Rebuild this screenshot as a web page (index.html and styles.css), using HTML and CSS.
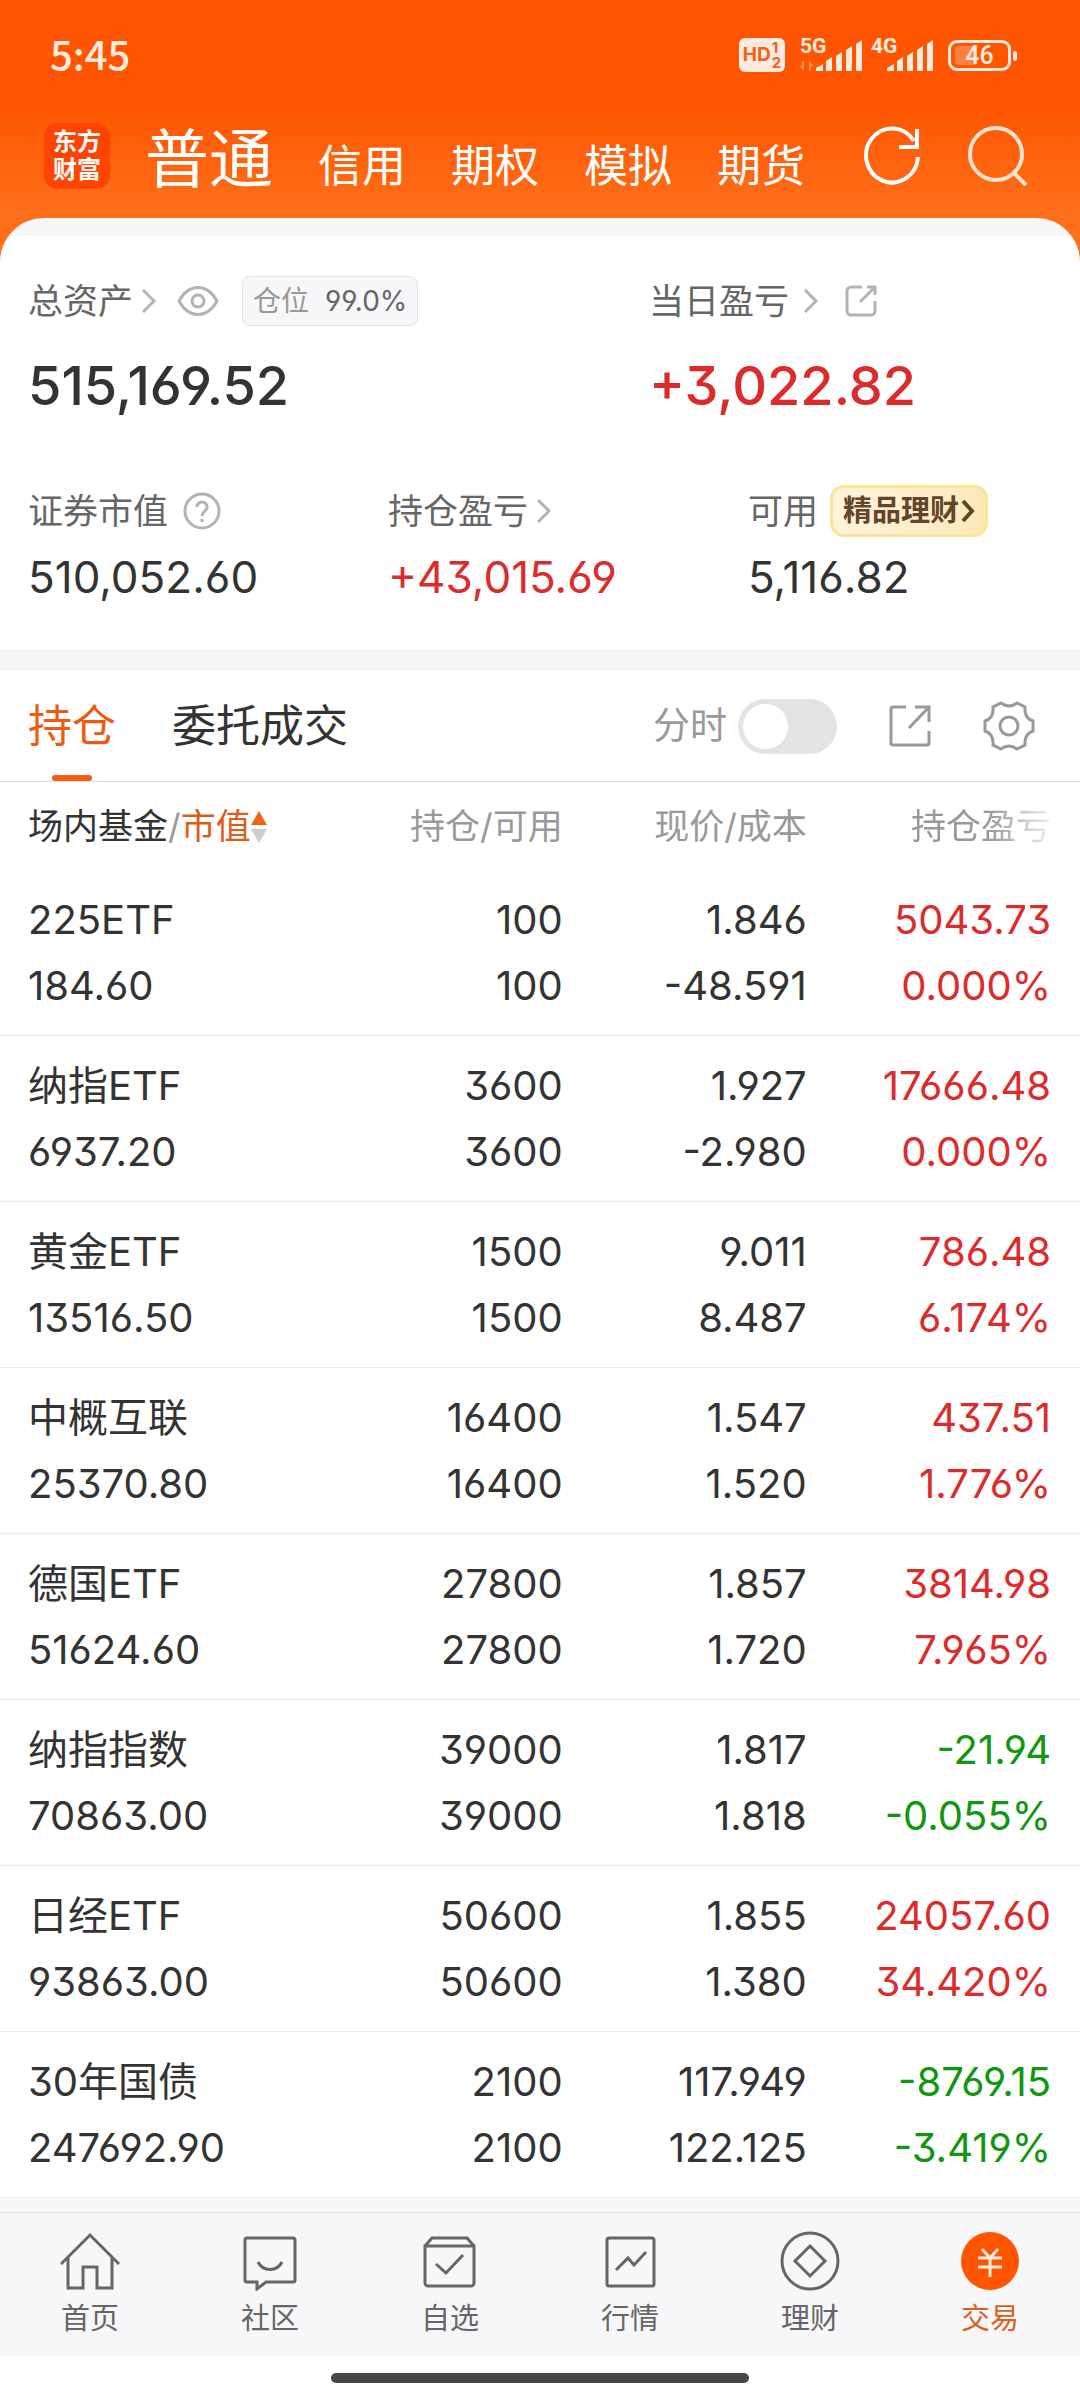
FILE: index.html
```html
<!DOCTYPE html>
<html lang="zh-CN">

<head>
    <meta charset="UTF-8">
    <meta name="viewport" content="width=device-width, initial-scale=1.0">
    <title>交易</title>
    <link rel="stylesheet" href="styles.css">
</head>

<body>
    <header class="header">
        <div class="status">
            <span class="time">5:45</span>
            <div class="status-icons">
                <span class="hd"><b>HD</b><span class="sim"><i>1</i><i>2</i></span></span>
                <svg class="signal" width="64" height="56" viewBox="0 -10 64 56">
                    <text x="1" y="16" class="net">5G</text>
                    <path class="dim" d="M5 24v10l-5-5h3v-5zM10 34V24l5 5h-3v5z" />
                    <path d="M17 34v-3l7-4v7zM27 34V24l6-4v14zM37 34V19l6-4v19zM47 34V13l6-4v25zM57 34V7l6-4v31z" />
                </svg>
                <svg class="signal second" width="64" height="56" viewBox="0 -10 64 56">
                    <text x="1" y="16" class="net">4G</text>
                    <path d="M17 34v-3l7-4v7zM27 34V24l6-4v14zM37 34V19l6-4v19zM47 34V13l6-4v25zM57 34V7l6-4v31z" />
                </svg>
                <span class="battery"><span class="level"></span><span class="charge">46</span></span>
            </div>
        </div>
        <div class="topbar">
            <a class="logo" href="#">东方<br>财富</a>
            <nav class="modes">
                <a class="mode active" href="#">普通</a>
                <a class="mode" href="#">信用</a>
                <a class="mode" href="#">期权</a>
                <a class="mode" href="#">模拟</a>
                <a class="mode" href="#">期货</a>
            </nav>
            <button class="icon-btn" aria-label="刷新">
                <svg width="60" height="60" viewBox="0 0 60 60" stroke="#fff" stroke-width="4">
                    <path d="M56 31A26 27 0 1 1 52 15M55 3v18H37" />
                </svg>
            </button>
            <button class="icon-btn search" aria-label="搜索">
                <svg width="60" height="60" viewBox="0 0 60 60" stroke="#ffe3d2" stroke-width="4">
                    <circle cx="28" cy="28" r="26" />
                    <path d="M45 46l13 13" />
                </svg>
            </button>
        </div>
    </header>

    <main>
        <section class="account">
            <div class="totals">
                <div class="total">
                    <div class="label">
                        <span>总资产</span>
                        <svg class="chevron" width="14" height="24" viewBox="0 0 14 24"><path d="M1 1l11 11L1 23" /></svg>
                        <svg class="eye" width="42" height="30" viewBox="0 0 42 30">
                            <path d="M2 15C12-3 30-3 40 15C30 33 12 33 2 15z" />
                            <circle cx="21" cy="15" r="6" />
                        </svg>
                        <span class="ratio"><span>仓位</span><b>99.0%</b></span>
                    </div>
                    <p class="big">515,169.52</p>
                </div>
                <div class="total">
                    <div class="label">
                        <span>当日盈亏</span>
                        <svg class="chevron wide" width="14" height="24" viewBox="0 0 14 24"><path d="M1 1l11 11L1 23" /></svg>
                        <svg class="share" width="32" height="32" viewBox="0 0 32 32">
                            <path d="M17 2H6a4 4 0 0 0-4 4v20a4 4 0 0 0 4 4h20a4 4 0 0 0 4-4V16M15 17L30 2M22 2h8v8" />
                        </svg>
                    </div>
                    <p class="big up">+3,022.82</p>
                </div>
            </div>
            <div class="details">
                <div class="detail">
                    <div class="label">
                        <span>证券市值</span>
                        <svg class="help" width="38" height="38" viewBox="0 0 38 38">
                            <circle cx="19" cy="19" r="17" />
                            <path d="M14 15a5 5 0 1 1 8 4c-2 2-3 2-3 5M19 27v3" />
                        </svg>
                    </div>
                    <p class="mid">510,052.60</p>
                </div>
                <div class="detail">
                    <div class="label">
                        <span>持仓盈亏</span>
                        <svg class="chevron" width="14" height="24" viewBox="0 0 14 24"><path d="M1 1l11 11L1 23" /></svg>
                    </div>
                    <p class="mid up">+43,015.69</p>
                </div>
                <div class="detail">
                    <div class="label">
                        <span>可用</span>
                        <a class="promo" href="#">精品理财<svg width="14" height="24" viewBox="0 0 14 24"><path d="M2 2l9 10-9 10" /></svg></a>
                    </div>
                    <p class="mid">5,116.82</p>
                </div>
            </div>
        </section>

        <section class="holdings">
            <div class="toolbar">
                <button class="tab active">持仓</button>
                <button class="tab">委托成交</button>
                <label class="switch-label" for="chart">分时</label>
                <input class="switch" type="checkbox" id="chart">
                <button class="tool" aria-label="分享">
                    <svg width="42" height="42" viewBox="0 0 42 42">
                        <path d="M17 2H4a2 2 0 0 0-2 2v34a2 2 0 0 0 2 2h34a2 2 0 0 0 2-2V26M20 23L40 2M26 2h14v15" />
                    </svg>
                </button>
                <button class="tool gear" aria-label="设置">
                    <svg width="52" height="50" viewBox="0 0 52 50">
                        <path d="M18 2Q26 8 34 2L42 6Q41 17 50 20V30Q41 33 42 44L34 48Q26 42 18 48L10 44Q11 33 2 30V20Q11 17 10 6Z" />
                        <circle cx="26" cy="25" r="9" />
                    </svg>
                </button>
            </div>

            <table class="table">
                <thead>
                    <tr>
                        <th>场内基金<span class="slash">/</span><span class="sorted">市值</span><svg width="16" height="32" viewBox="0 0 16 32"><path fill="#f0641a" d="M8 0l8 14H0z" /><path fill="#ccc" d="M8 32L0 18h16z" /></svg></th>
                        <th>持仓/可用</th>
                        <th>现价/成本</th>
                        <th><span class="fade">持仓盈亏</span></th>
                    </tr>
                </thead>
                <tbody>
                    <tr>
                        <td>225ETF<br>184.60</td>
                        <td>100<br>100</td>
                        <td>1.846<br>-48.591</td>
                        <td class="up">5043.73<br>0.000%</td>
                    </tr>
                    <tr>
                        <td>纳指ETF<br>6937.20</td>
                        <td>3600<br>3600</td>
                        <td>1.927<br>-2.980</td>
                        <td class="up">17666.48<br>0.000%</td>
                    </tr>
                    <tr>
                        <td>黄金ETF<br>13516.50</td>
                        <td>1500<br>1500</td>
                        <td>9.011<br>8.487</td>
                        <td class="up">786.48<br>6.174%</td>
                    </tr>
                    <tr>
                        <td>中概互联<br>25370.80</td>
                        <td>16400<br>16400</td>
                        <td>1.547<br>1.520</td>
                        <td class="up">437.51<br>1.776%</td>
                    </tr>
                    <tr>
                        <td>德国ETF<br>51624.60</td>
                        <td>27800<br>27800</td>
                        <td>1.857<br>1.720</td>
                        <td class="up">3814.98<br>7.965%</td>
                    </tr>
                    <tr>
                        <td>纳指指数<br>70863.00</td>
                        <td>39000<br>39000</td>
                        <td>1.817<br>1.818</td>
                        <td class="down">-21.94<br>-0.055%</td>
                    </tr>
                    <tr>
                        <td>日经ETF<br>93863.00</td>
                        <td>50600<br>50600</td>
                        <td>1.855<br>1.380</td>
                        <td class="up">24057.60<br>34.420%</td>
                    </tr>
                    <tr>
                        <td>30年国债<br>247692.90</td>
                        <td>2100<br>2100</td>
                        <td>117.949<br>122.125</td>
                        <td class="down">-8769.15<br>-3.419%</td>
                    </tr>
                </tbody>
            </table>
        </section>
    </main>

    <nav class="tabbar">
        <a class="item" href="#">
            <svg width="60" height="60" viewBox="0 0 60 60">
                <path d="M1 33L30 4l29 29M8 27v30h15V36h14v21h15V27" />
            </svg>
            首页
        </a>
        <a class="item" href="#">
            <svg width="60" height="60" viewBox="0 0 60 60">
                <path d="M7 7h46a2 2 0 0 1 2 2v40a2 2 0 0 1-2 2H26l-9 7v-7H7a2 2 0 0 1-2-2V9a2 2 0 0 1 2-2z" />
                <path d="M18 31c5 10 19 10 24 0" />
            </svg>
            社区
        </a>
        <a class="item" href="#">
            <svg width="60" height="60" viewBox="0 0 60 60">
                <path d="M5 15h49v37a3 3 0 0 1-3 3H8a3 3 0 0 1-3-3zl7-8h35l7 8M16 33l10 9 17-18" />
            </svg>
            自选
        </a>
        <a class="item" href="#">
            <svg width="60" height="60" viewBox="0 0 60 60">
                <rect x="7" y="7" width="47" height="48" rx="2" />
                <path d="M16 39l12-12 6 7 12-13" />
            </svg>
            行情
        </a>
        <a class="item" href="#">
            <svg width="60" height="60" viewBox="0 0 60 60">
                <circle cx="30" cy="30" r="28" />
                <path d="M30 15l15 15-15 15-15-15z" />
            </svg>
            理财
        </a>
        <a class="item current" href="#">
            <svg width="60" height="60" viewBox="0 0 60 60">
                <circle class="coin" cx="30" cy="30" r="29" />
                <path class="yen" d="M22 18l8 9 8-9M18 27h24M18 36h24M30 27v19" />
            </svg>
            交易
        </a>
    </nav>
    <div class="gesture"><span></span></div>
</body>

</html>
```
FILE: styles.css
```css
* {
    padding: 0;
    margin: 0;
    box-sizing: border-box;
}

body {
    background: #ffffff;
    color: #333333;
    font-family: Inter, "Noto Sans CJK SC", sans-serif;
    /* straight 6 and 9, flat-top 3 */
    font-feature-settings: "cv03", "cv04", "cv09";
    font-size: 35px;
}

a {
    color: inherit;
    text-decoration: none;
}

button {
    border: none;
    background: none;
    color: inherit;
    font: inherit;
}

svg {
    display: block;
    flex: none;
    fill: none;
}

.up {
    color: #dc2b2b;
}

.down {
    color: #109610;
}

/* header */
.header {
    padding-bottom: 44px;
    background: linear-gradient(#ff5500 104px, #ff6f1a 212px);
    color: #ffffff;
}

.status {
    display: flex;
    align-items: center;
    justify-content: space-between;
    height: 110px;
    padding: 0 69px 0 50px;
}

.time {
    font-family: "Noto Sans CJK SC", sans-serif;
    font-weight: 500;
    font-size: 40px;
    line-height: 44px;
    padding-bottom: 4px;
    color: #ffeadf;
}

.status-icons {
    display: flex;
    align-items: center;
    color: #ffeadf;
}

.hd {
    display: flex;
    align-items: center;
    justify-content: center;
    gap: 1px;
    width: 46px;
    height: 34px;
    border-radius: 6px;
    background: #ffeadf;
    color: #f06018;
    font-size: 19px;
    line-height: 34px;
}

.sim {
    display: flex;
    flex-direction: column;
    font-size: 15px;
    font-weight: 700;
    line-height: 15px;
}

.sim i {
    font-style: normal;
}

.signal {
    margin-left: 14px;
    fill: #ffeadf;
}

.signal.second {
    margin-left: 7px;
}

.dim {
    opacity: 0.4;
}

.net {
    font-family: Roboto, sans-serif;
    font-size: 21px;
    font-weight: 700;
}

.battery {
    position: relative;
    width: 63px;
    height: 31px;
    margin-left: 14px;
    border: 3px solid #ffeadf;
    border-radius: 9px;
    font-family: Roboto, sans-serif;
    font-size: 25px;
    font-weight: 500;
    line-height: 25px;
    text-align: center;
}

.battery::after {
    content: "";
    position: absolute;
    top: 8px;
    right: -9px;
    width: 4px;
    height: 10px;
    border-radius: 2px;
    background: #ffeadf;
}

.level {
    position: absolute;
    top: 3px;
    left: 4px;
    width: 22px;
    height: 19px;
    border-radius: 4px;
    background: rgba(255, 255, 255, 0.25);
}

.charge {
    position: relative;
}

.topbar {
    display: flex;
    align-items: center;
    height: 108px;
    padding: 0 52px 16px 44px;
}

.logo {
    width: 66px;
    height: 66px;
    padding-top: 5px;
    border-radius: 14px;
    background: #ff4400;
    font-size: 24px;
    font-weight: 700;
    line-height: 28px;
    text-align: center;
}

.modes {
    display: flex;
    flex: 1;
    align-items: baseline;
    gap: 45px;
    margin-left: 35px;
    padding-top: 12px;
}

.mode {
    font-size: 44px;
    line-height: 66px;
}

.mode.active {
    font-size: 64px;
}

.icon-btn.search {
    margin-left: 46px;
}

/* account summary */
.account {
    margin-top: -44px;
    padding-bottom: 45px;
    border-radius: 44px 44px 0 0;
    background: linear-gradient(#f7f7fa 18px, #ffffff 18px);
}

.totals,
.details {
    display: flex;
}

.totals {
    padding-top: 58px;
}

.details {
    padding-top: 67px;
}

.total {
    flex: 1;
    padding-left: 28px;
}

.total:first-child {
    flex: 0 0 57.5%;
}

.detail {
    flex: 1;
    padding-left: 28px;
}

.label {
    display: flex;
    align-items: center;
    height: 50px;
    color: #666666;
    line-height: 50px;
    white-space: nowrap;
}

.label svg {
    stroke: #b3b3b3;
    stroke-width: 3;
}

.chevron {
    margin-left: 9px;
}

.chevron.wide,
.help {
    margin-left: 15px;
}

.eye {
    margin-left: 21px;
}

.share {
    margin-left: 27px;
}

.ratio {
    display: flex;
    align-items: center;
    gap: 16px;
    height: 50px;
    margin-left: 23px;
    padding: 0 10px;
    border: 1px solid #e4e4e8;
    border-radius: 8px;
    background: #f7f7fa;
    color: #999999;
    font-size: 28px;
}

.ratio b {
    color: #666666;
    font-weight: 400;
}

.promo {
    display: flex;
    align-items: center;
    gap: 2px;
    height: 52px;
    margin-left: 12px;
    padding: 0 10px;
    border: 3px solid #f9e596;
    border-radius: 14px;
    background: linear-gradient(100deg, #fff4de, #ffe8b8);
    color: #64452b;
    font-size: 29px;
    font-weight: 700;
    line-height: 46px;
}

.promo svg {
    stroke: #64452b;
    stroke-width: 4;
}

.big {
    margin-top: 27px;
    font-size: 54px;
    font-weight: 500;
    line-height: 66px;
}

.mid {
    margin-top: 14px;
    font-size: 44px;
    line-height: 54px;
}

/* holdings */
.holdings {
    border-top: 22px solid #f7f7fa;
}

.toolbar {
    display: flex;
    align-items: center;
    height: 111px;
    padding: 0 45px 0 28px;
    border-bottom: 1px solid #dddddf;
}

.tab {
    position: relative;
    height: 110px;
    margin-right: 56px;
    font-size: 44px;
    line-height: 110px;
}

.tab.active {
    color: #ee5a12;
}

.tab.active::after {
    content: "";
    position: absolute;
    bottom: 0;
    left: 50%;
    width: 40px;
    height: 6px;
    margin-left: -20px;
    border-radius: 3px;
    background: #f55d10;
}

.switch-label {
    margin-left: auto;
    color: #999999;
    font-size: 37px;
    line-height: 110px;
}

.switch {
    appearance: none;
    width: 99px;
    height: 55px;
    margin-left: 11px;
    padding: 5px;
    border-radius: 28px;
    background: #e4e4e6;
}

.switch::before {
    content: "";
    display: block;
    width: 45px;
    height: 45px;
    border-radius: 50%;
    background: #ffffff;
}

.switch:checked {
    background: #ff5500;
}

.switch:checked::before {
    margin-left: auto;
}

.tool {
    margin-left: 52px;
}

.tool svg {
    stroke: #999999;
    stroke-width: 3;
}

.table {
    width: 100%;
    border-collapse: collapse;
    table-layout: fixed;
}

th,
td {
    width: 22.6%;
    text-align: right;
    white-space: nowrap;
}

th {
    color: #999999;
    font-weight: 400;
    line-height: 88px;
}

th:first-child,
td:first-child {
    width: 29.5%;
    padding-left: 28px;
    text-align: left;
}

th:last-child,
td:last-child {
    width: 25.3%;
    padding-right: 29px;
}

th:first-child {
    color: #333333;
}

th svg {
    display: inline-block;
    vertical-align: -4px;
}

.slash {
    color: #999999;
}

.sorted {
    color: #dd5d18;
}

.fade {
    -webkit-mask-image: linear-gradient(to right, #000 55%, rgba(0, 0, 0, 0.15));
    mask-image: linear-gradient(to right, #000 55%, rgba(0, 0, 0, 0.15));
}

td {
    padding: 17px 0 16px;
    border-bottom: 1px solid #ececee;
    font-size: 40px;
    line-height: 66px;
}

/* bottom navigation */
.tabbar {
    display: flex;
    margin-top: 14px;
    border-top: 1px solid #e2e2e5;
    background: #f7f7fa;
    box-shadow: 0 -14px #f7f8fa;
}

.item {
    display: flex;
    flex: 1;
    flex-direction: column;
    align-items: center;
    gap: 10px;
    padding: 18px 0 19px;
    color: #666666;
    font-size: 29px;
    line-height: 36px;
}

.item svg {
    stroke: #666666;
    stroke-width: 3;
}

.item.current {
    color: #d9601c;
}

.item .coin {
    fill: #ff5500;
    stroke: none;
}

.item .yen {
    stroke: #ffeadf;
}

.gesture {
    display: flex;
    justify-content: center;
    padding: 17px 0;
}

.gesture span {
    width: 38.7%;
    height: 10px;
    border-radius: 5px;
    background: #464646;
}
```
